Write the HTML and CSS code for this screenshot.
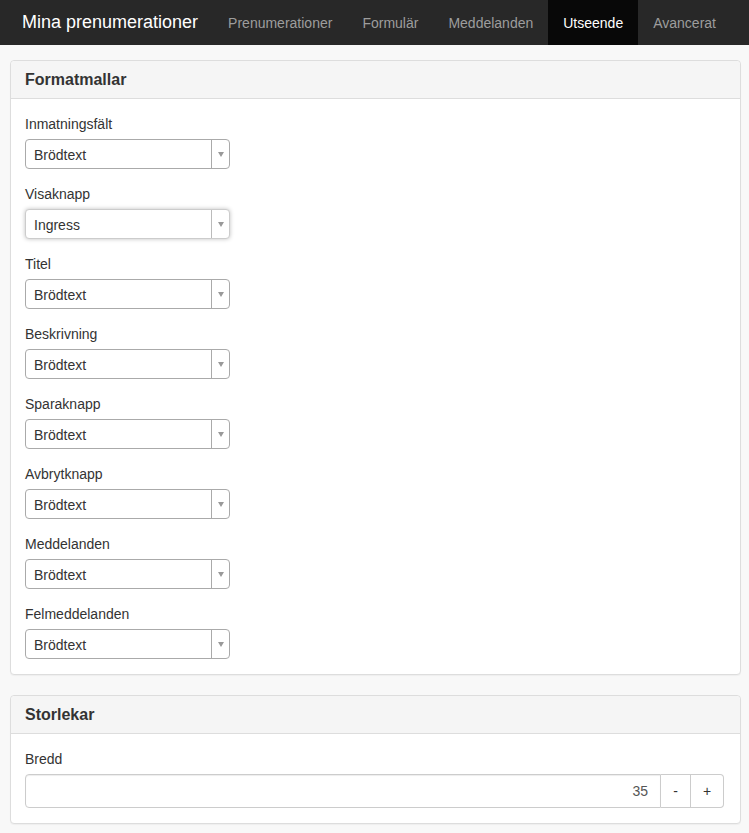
FILE: index.html
```html
<!DOCTYPE html>
<html lang="sv">
<head>
    <meta charset="UTF-8">
    <title>Mina prenumerationer</title>
    <link rel="stylesheet" href="styles.css">
</head>
<body>

<!-- navigering -->
<div class="navbar">
    <span class="brand">Mina prenumerationer</span>
    <a class="nav-item">Prenumerationer</a>
    <a class="nav-item">Formulär</a>
    <a class="nav-item">Meddelanden</a>
    <a class="nav-item active">Utseende</a>
    <a class="nav-item">Avancerat</a>
</div>

<div class="content">
    <!-- formatmallar -->
    <div class="panel">
        <div class="panel-heading">Formatmallar</div>
        <div class="panel-body">
            <div class="form-group">
                <label>Inmatningsfält</label>
                <div class="select-box"><span class="value">Brödtext</span><span class="arrow"></span></div>
            </div>
            <div class="form-group">
                <label>Visaknapp</label>
                <div class="select-box focused"><span class="value">Ingress</span><span class="arrow"></span></div>
            </div>
            <div class="form-group">
                <label>Titel</label>
                <div class="select-box"><span class="value">Brödtext</span><span class="arrow"></span></div>
            </div>
            <div class="form-group">
                <label>Beskrivning</label>
                <div class="select-box"><span class="value">Brödtext</span><span class="arrow"></span></div>
            </div>
            <div class="form-group">
                <label>Sparaknapp</label>
                <div class="select-box"><span class="value">Brödtext</span><span class="arrow"></span></div>
            </div>
            <div class="form-group">
                <label>Avbrytknapp</label>
                <div class="select-box"><span class="value">Brödtext</span><span class="arrow"></span></div>
            </div>
            <div class="form-group">
                <label>Meddelanden</label>
                <div class="select-box"><span class="value">Brödtext</span><span class="arrow"></span></div>
            </div>
            <div class="form-group">
                <label>Felmeddelanden</label>
                <div class="select-box"><span class="value">Brödtext</span><span class="arrow"></span></div>
            </div>
        </div>
    </div>

    <!-- storlekar -->
    <div class="panel">
        <div class="panel-heading">Storlekar</div>
        <div class="panel-body">
            <div class="form-group">
                <label>Bredd</label>
                <div class="input-group">
                    <input class="number-input" type="text" value="35">
                    <button class="step-btn minus">-</button>
                    <button class="step-btn plus">+</button>
                </div>
            </div>
        </div>
    </div>
</div>

</body>
</html>
```

FILE: styles.css
```css
body {
    font-family: "Liberation Sans", Arial, sans-serif;
    font-size: 14px;
    color: #333;
    margin: 0;
    padding: 0;
    background-color: #f8f8f8;
}
.navbar {
    display: flex;
    align-items: stretch;
    height: 45px;
    background-color: #282828;
    padding-left: 7px;
}
.brand {
    display: flex;
    align-items: center;
    padding: 0 15px;
    font-size: 18px;
    color: #fff;
}
.nav-item {
    display: flex;
    align-items: center;
    padding: 0 15px;
    color: #9d9d9d;
    font-size: 14px;
}
.nav-item.active {
    background-color: #080808;
    color: #fff;
}
.content {
    padding: 15px 8px 0 10px;
}
.panel {
    background-color: #fff;
    border: 1px solid #ddd;
    border-radius: 4px;
    margin-bottom: 20px;
    box-shadow: 0 1px 1px rgba(0, 0, 0, 0.04);
}
.panel-heading {
    background-color: #f5f5f5;
    border-bottom: 1px solid #ddd;
    border-radius: 4px 4px 0 0;
    padding: 10px 14px;
    font-size: 16px;
    line-height: 17px;
    font-weight: bold;
    color: #333;
}
.panel-body {
    padding: 15px 16px 15px 14px;
}
.form-group {
    margin-bottom: 15px;
}
.form-group:last-child {
    margin-bottom: 0;
}
.form-group label {
    display: block;
    line-height: 20px;
    margin-bottom: 5px;
}
.select-box {
    display: flex;
    width: 203px;
    height: 28px;
    border: 1px solid #aaa;
    border-radius: 4px;
    background-color: #fff;
}
.select-box.focused {
    border-color: #ccc;
    box-shadow: 0 0 4px rgba(0, 0, 0, 0.25);
}
.select-box .value {
    flex: 1;
    display: flex;
    align-items: center;
    padding: 2px 0 0 8px;
    color: #333;
}
.select-box .arrow {
    width: 17px;
    border-left: 1px solid #aaa;
    display: flex;
    align-items: center;
    justify-content: center;
}
.select-box.focused .arrow {
    border-left-color: #bbb;
}
.select-box .arrow::after {
    content: "";
    border-left: 3px solid transparent;
    border-right: 3px solid transparent;
    border-top: 5px solid #999;
}
.input-group {
    display: flex;
    height: 34px;
}
.number-input {
    flex: 1;
    min-width: 0;
    border: 1px solid #ccc;
    border-radius: 4px 0 0 4px;
    padding: 0 12px;
    text-align: right;
    font-family: inherit;
    font-size: 14px;
    color: #555;
    box-shadow: inset 0 1px 1px rgba(0, 0, 0, 0.075);
}
.step-btn {
    border: 1px solid #ccc;
    border-left: none;
    background-color: #fff;
    font-family: inherit;
    font-size: 14px;
    color: #333;
    padding: 0;
}
.step-btn.minus {
    width: 30px;
}
.step-btn.plus {
    width: 33px;
    border-radius: 0 4px 4px 0;
}
```
